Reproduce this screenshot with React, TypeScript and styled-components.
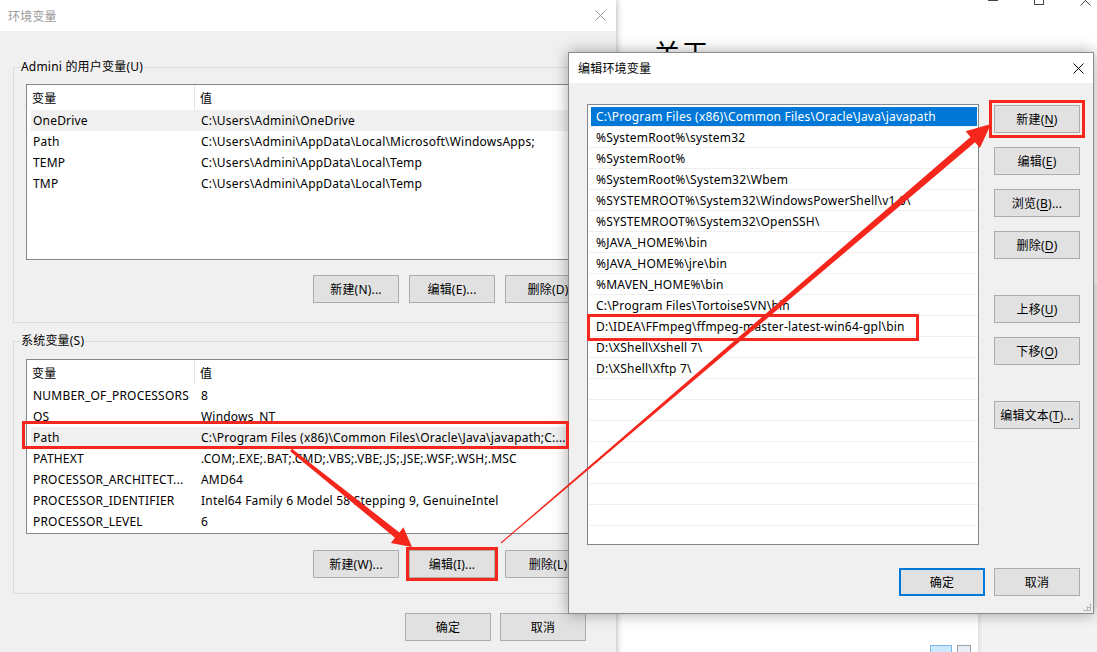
import React from 'react';
import styled, { createGlobalStyle, css } from 'styled-components';

const GlobalStyle = createGlobalStyle`
  html, body { margin: 0; padding: 0; }
  body {
    font-family: "Noto Sans", "Noto Sans CJK SC", sans-serif;
    font-size: 12px;
    letter-spacing: 0.2px;
    color: #000;
    background: #fff;
  }
  * { box-sizing: border-box; }
`;

type Pt = [number, number];

// tapered arrow polygon from start to tip
function arrowPoints(from: Pt, to: Pt, w0: number, w1: number, headLen: number, headHalf: number) {
  const dx = to[0] - from[0];
  const dy = to[1] - from[1];
  const len = Math.hypot(dx, dy);
  const ux = dx / len;
  const uy = dy / len;
  const px = -uy;
  const py = ux;
  const bx = to[0] - ux * headLen;
  const by = to[1] - uy * headLen;
  const pts: Pt[] = [
    [from[0] + (px * w0) / 2, from[1] + (py * w0) / 2],
    [bx + (px * w1) / 2, by + (py * w1) / 2],
    [bx + px * headHalf, by + py * headHalf],
    to,
    [bx - px * headHalf, by - py * headHalf],
    [bx - (px * w1) / 2, by - (py * w1) / 2],
    [from[0] - (px * w0) / 2, from[1] - (py * w0) / 2],
  ];
  return pts.map((p) => p.map((v) => v.toFixed(1)).join(',')).join(' ');
}

const userVars = [
  ['OneDrive', 'C:\\Users\\Admini\\OneDrive'],
  ['Path', 'C:\\Users\\Admini\\AppData\\Local\\Microsoft\\WindowsApps;'],
  ['TEMP', 'C:\\Users\\Admini\\AppData\\Local\\Temp'],
  ['TMP', 'C:\\Users\\Admini\\AppData\\Local\\Temp'],
];

const sysVars = [
  ['NUMBER_OF_PROCESSORS', '8'],
  ['OS', 'Windows_NT'],
  ['Path', 'C:\\Program Files (x86)\\Common Files\\Oracle\\Java\\javapath;C:...'],
  ['PATHEXT', '.COM;.EXE;.BAT;.CMD;.VBS;.VBE;.JS;.JSE;.WSF;.WSH;.MSC'],
  ['PROCESSOR_ARCHITECT...', 'AMD64'],
  ['PROCESSOR_IDENTIFIER', 'Intel64 Family 6 Model 58 Stepping 9, GenuineIntel'],
  ['PROCESSOR_LEVEL', '6'],
];

const pathEntries = [
  'C:\\Program Files (x86)\\Common Files\\Oracle\\Java\\javapath',
  '%SystemRoot%\\system32',
  '%SystemRoot%',
  '%SystemRoot%\\System32\\Wbem',
  '%SYSTEMROOT%\\System32\\WindowsPowerShell\\v1.0\\',
  '%SYSTEMROOT%\\System32\\OpenSSH\\',
  '%JAVA_HOME%\\bin',
  '%JAVA_HOME%\\jre\\bin',
  '%MAVEN_HOME%\\bin',
  'C:\\Program Files\\TortoiseSVN\\bin',
  'D:\\IDEA\\FFmpeg\\ffmpeg-master-latest-win64-gpl\\bin',
  'D:\\XShell\\Xshell 7\\',
  'D:\\XShell\\Xftp 7\\',
];

const CloseIcon = ({ color }: { color: string }) => (
  <svg width="11" height="11" viewBox="0 0 11 11">
    <path d="M0.5 0.5 L10.5 10.5 M10.5 0.5 L0.5 10.5" stroke={color} strokeWidth="1" fill="none" />
  </svg>
);

const App = () => {
  const rows = Array.from({ length: 21 }, (_, i) => pathEntries[i] ?? '');
  return (
    <>
      <GlobalStyle />
      <Desktop>
        <SettingsWindow>
          <SettingsHeading>关于</SettingsHeading>
          <SettingsFooter>
            <ViewToggle active />
            <ViewToggle />
          </SettingsFooter>
        </SettingsWindow>

        <BackWindow>
          <Control>
            <svg width="10" height="10" viewBox="0 0 10 10">
              <path d="M0 5.5 H10" stroke="#444" strokeWidth="1" />
            </svg>
          </Control>
          <Control>
            <svg width="10" height="10" viewBox="0 0 10 10">
              <rect x="0.5" y="0.5" width="9" height="9" stroke="#444" fill="none" />
            </svg>
          </Control>
          <Control>
            <CloseIcon color="#444" />
          </Control>
        </BackWindow>

        <EnvWindow>
          <TitleBar>
            <TitleText inactive>环境变量</TitleText>
            <CloseIcon color="#999" />
          </TitleBar>
          <EnvBody>
            <Group>
              <Legend>Admini 的用户变量(U)</Legend>
              <ListView height={176}>
                <ListHeader>
                  <HeaderCell first>变量</HeaderCell>
                  <HeaderCell>值</HeaderCell>
                </ListHeader>
                {userVars.map(([k, v], i) => (
                  <VarRow key={k + i} selected={i === 0}>
                    <NameCell>{k}</NameCell>
                    <ValueCell>{v}</ValueCell>
                  </VarRow>
                ))}
              </ListView>
              <ButtonRow>
                <Button>新建(N)...</Button>
                <Button>编辑(E)...</Button>
                <Button>删除(D)</Button>
              </ButtonRow>
            </Group>
            <Group second>
              <Legend>系统变量(S)</Legend>
              <ListView height={175}>
                <ListHeader>
                  <HeaderCell first>变量</HeaderCell>
                  <HeaderCell>值</HeaderCell>
                </ListHeader>
                {sysVars.map(([k, v], i) => (
                  <VarRow key={k + i} selected={k === 'Path'}>
                    <NameCell>{k}</NameCell>
                    <ValueCell>{v}</ValueCell>
                  </VarRow>
                ))}
              </ListView>
              <ButtonRow tight>
                <Button>新建(W)...</Button>
                <Button marked>编辑(I)...</Button>
                <Button>删除(L)</Button>
              </ButtonRow>
            </Group>
            <EnvFooter>
              <Button>确定</Button>
              <Button>取消</Button>
            </EnvFooter>
          </EnvBody>
        </EnvWindow>

        <Dialog>
          <TitleBar dialog>
            <TitleText>编辑环境变量</TitleText>
            <CloseIcon color="#000" />
          </TitleBar>
          <DialogBody>
            <PathList>
              {rows.map((p, i) => (
                <PathRow key={i}>
                  <PathText selected={i === 0}>{p}</PathText>
                </PathRow>
              ))}
            </PathList>
            <SideButtons>
              <Button marked wide>新建(<u>N</u>)</Button>
              <Button>编辑(<u>E</u>)</Button>
              <Button>浏览(<u>B</u>)...</Button>
              <Button>删除(<u>D</u>)</Button>
              <Button spaced>上移(<u>U</u>)</Button>
              <Button>下移(<u>O</u>)</Button>
              <Button spaced>编辑文本(<u>T</u>)...</Button>
            </SideButtons>
          </DialogBody>
          <DialogFooter>
            <Button primary>确定</Button>
            <Button>取消</Button>
          </DialogFooter>
          <Grip />
        </Dialog>

        <Mark style={{ left: 22, top: 421, width: 547, height: 28 }} />
        <Mark style={{ left: 587, top: 314, width: 332, height: 27 }} />

        <Annotations width="1097" height="652" viewBox="0 0 1097 652">
          <polygon points={arrowPoints([291, 450], [412, 547], 3, 7, 19, 10)} fill="#f5261c" />
          <polygon points={arrowPoints([501, 543], [991, 124], 1, 7, 24, 11)} fill="#f5261c" />
        </Annotations>
      </Desktop>
    </>
  );
};

export default App;

const Desktop = styled.div`
  position: relative;
  width: 1097px;
  height: 652px;
  overflow: hidden;
  background: #f3f3f3;
`;

const BackWindow = styled.div`
  position: absolute;
  left: 978px;
  top: -16px;
  width: 130px;
  height: 300px;
  background: #fff;
  display: flex;
  justify-content: flex-end;
  align-items: flex-start;
`;

const Control = styled.div`
  width: 46px;
  height: 32px;
  flex: none;
  display: flex;
  align-items: center;
  justify-content: center;
`;

const SettingsWindow = styled.div`
  position: absolute;
  left: 616px;
  top: 0;
  width: 362px;
  height: 664px;
  background: #fff;
  display: flex;
  flex-direction: column;
  box-shadow: 1px 0 5px rgba(0, 0, 0, 0.12);
`;

const SettingsHeading = styled.div`
  margin: 38px 0 0 37px;
  font-family: "Noto Sans CJK SC", sans-serif;
  font-size: 28px;
  line-height: 30px;
  letter-spacing: 0;
  color: #000;
`;

const SettingsFooter = styled.div`
  margin-top: auto;
  display: flex;
  gap: 5px;
  padding: 0 0 2px 314px;
`;

const ViewToggle = styled.div<{ active?: boolean }>`
  width: ${(p) => (p.active ? 22 : 14)}px;
  height: 17px;
  border: 1px solid ${(p) => (p.active ? '#7ab7ea' : '#9aa4ae')};
  background: ${(p) => (p.active ? '#cce8ff' : '#e8eef5')};
`;

const EnvWindow = styled.div`
  position: absolute;
  left: 0;
  top: 0;
  width: 616px;
  height: 700px;
  background: #f0f0f0;
  box-shadow: 1px 0 6px rgba(0, 0, 0, 0.28);
`;

const TitleBar = styled.div<{ dialog?: boolean }>`
  height: ${(p) => (p.dialog ? 30 : 31)}px;
  background: #fff;
  display: flex;
  align-items: center;
  justify-content: space-between;
  padding: ${(p) => (p.dialog ? '0 9px 0 9px' : '0 10px 0 8px')};
`;

const TitleText = styled.span<{ inactive?: boolean }>`
  font-size: 12px;
  color: ${(p) => (p.inactive ? '#999' : '#000')};
`;

const EnvBody = styled.div`
  padding: 28px 13px 0 13px;
`;

const Group = styled.fieldset<{ second?: boolean }>`
  margin: ${(p) => (p.second ? '10px 0 0 0' : '0')};
  border: 1px solid #dcdcdc;
  padding: ${(p) => (p.second ? 10 : 9)}px 11px ${(p) => (p.second ? 15 : 19)}px 12px;
  min-width: 0;
`;

const Legend = styled.legend`
  padding: 0 1px;
  margin-left: -6px;
  line-height: 16px;
  font-size: 12px;
`;

const ListView = styled.div<{ height: number }>`
  height: ${(p) => p.height}px;
  border: 1px solid #828790;
  background: #fff;
  overflow: hidden;
`;

const ListHeader = styled.div`
  height: 25px;
  display: flex;
`;

const HeaderCell = styled.div<{ first?: boolean }>`
  display: flex;
  align-items: center;
  padding-left: 5px;
  width: ${(p) => (p.first ? '168px' : 'auto')};
  flex: ${(p) => (p.first ? 'none' : '1')};
  border-right: ${(p) => (p.first ? '1px solid #e5e5e5' : 'none')};
`;

const VarRow = styled.div<{ selected?: boolean }>`
  height: 21px;
  margin-left: 4px;
  display: flex;
  align-items: center;
  white-space: nowrap;
  background: ${(p) => (p.selected ? '#f0f0f0' : 'transparent')};
`;

const NameCell = styled.span`
  width: 164px;
  padding-left: 2px;
  flex: none;
  overflow: hidden;
`;

const ValueCell = styled.span`
  padding-left: 6px;
`;

const ButtonRow = styled.div<{ tight?: boolean }>`
  display: flex;
  justify-content: flex-end;
  gap: 10px;
  margin-top: ${(p) => (p.tight ? 16 : 15)}px;
`;

const Button = styled.button<{ marked?: boolean; primary?: boolean; spaced?: boolean; wide?: boolean }>`
  width: 86px;
  height: 28px;
  padding: 0;
  background: #e1e1e1;
  border: 1px solid #adadad;
  font: inherit;
  font-size: 12px;
  letter-spacing: 0.2px;
  color: #000;
  flex: none;
  u {
    text-decoration: underline;
    text-underline-offset: 2px;
  }
  ${(p) =>
    p.primary &&
    css`
      border: 2px solid #0078d7;
    `}
  ${(p) =>
    p.spaced &&
    css`
      margin-top: 22px;
    `}
  ${(p) =>
    p.marked &&
    css`
      outline: 3px solid #f5261c;
      outline-offset: ${p.wide ? '2px' : '0px'};
    `}
`;

const EnvFooter = styled.div`
  display: flex;
  justify-content: flex-end;
  gap: 9px;
  margin-top: 19px;
  padding-right: 17px;
`;

const Dialog = styled.div`
  position: absolute;
  left: 568px;
  top: 52px;
  width: 526px;
  height: 562px;
  background: #f0f0f0;
  border: 1px solid #8a8a8a;
  box-shadow: 0 0 14px rgba(0, 0, 0, 0.35);
`;

const DialogBody = styled.div`
  display: grid;
  grid-template-columns: 392px 86px;
  column-gap: 15px;
  padding: 21px 13px 0 18px;
`;

const PathList = styled.div`
  height: 441px;
  border: 1px solid #828790;
  background: #fff;
  overflow: hidden;
  padding-top: 1px;
`;

const PathRow = styled.div`
  height: 21px;
  padding: 1px 1px 0 3px;
  border-bottom: 1px solid #f0f0f0;
  display: flex;
`;

const PathText = styled.div<{ selected?: boolean }>`
  flex: 1;
  line-height: 19px;
  padding-left: 5px;
  white-space: nowrap;
  background: ${(p) => (p.selected ? '#0078d7' : 'transparent')};
  color: ${(p) => (p.selected ? '#fff' : '#000')};
`;

const SideButtons = styled.div`
  display: flex;
  flex-direction: column;
  gap: 14px;
  margin-top: 1px;
`;

const DialogFooter = styled.div`
  display: flex;
  justify-content: flex-end;
  gap: 9px;
  margin-top: 23px;
  padding-right: 13px;
`;

const Grip = styled.span`
  position: absolute;
  right: 2px;
  bottom: 2px;
  width: 8px;
  height: 8px;
  background-image: radial-gradient(circle, #b4b4b4 1px, transparent 1.2px);
  background-size: 3px 3px;
  clip-path: polygon(100% 0, 100% 100%, 0 100%);
`;

const Mark = styled.div`
  position: absolute;
  border: 3px solid #f5261c;
  pointer-events: none;
`;

const Annotations = styled.svg`
  position: absolute;
  left: 0;
  top: 0;
  pointer-events: none;
`;
